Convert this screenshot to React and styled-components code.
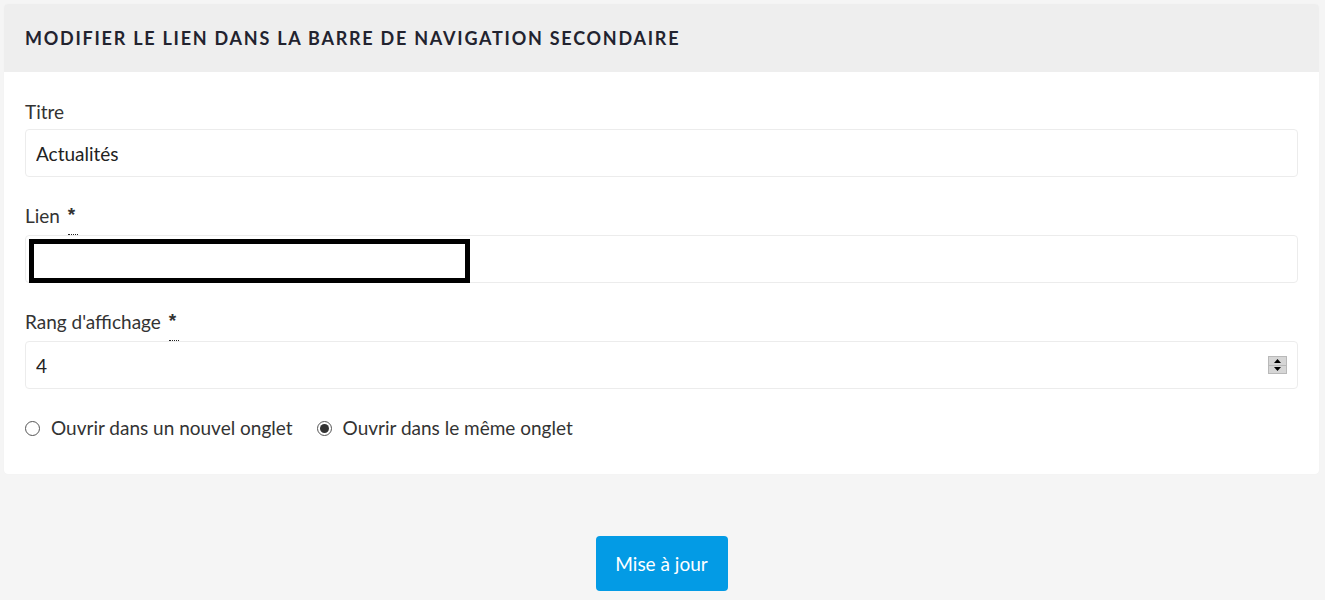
import styled, { createGlobalStyle } from 'styled-components';

const GlobalStyle = createGlobalStyle`
html, body {
margin: 0;
padding: 0;
background: #f5f5f5;
}
body {
font-family: Lato, "Liberation Sans", sans-serif;
color: #333;
}
* {
box-sizing: border-box;
}
`

function App() {
    return (
        <Page>
            <GlobalStyle />
            <Card>
                <CardHeader>
                    <h2>Modifier le lien dans la barre de navigation secondaire</h2>
                </CardHeader>
                <CardBody>
                    <Field>
                        <Label>Titre</Label>
                        <Input type="text" defaultValue="Actualités" />
                    </Field>
                    <Field>
                        <Label $required>Lien <Required title="obligatoire">*</Required></Label>
                        <InputWrap>
                            <Input type="text" defaultValue="" />
                            <Redacted />
                        </InputWrap>
                    </Field>
                    <Field>
                        <Label $required>Rang d'affichage <Required title="obligatoire">*</Required></Label>
                        <InputWrap>
                            <Input type="number" defaultValue="4" />
                            <Spinner>
                                <span>
                                    <svg width="7" height="4" viewBox="0 0 7 4"><path d="M3.5 0 L7 4 L0 4 Z" fill="#000" /></svg>
                                </span>
                                <span>
                                    <svg width="7" height="4" viewBox="0 0 7 4"><path d="M0 0 L7 0 L3.5 4 Z" fill="#000" /></svg>
                                </span>
                            </Spinner>
                        </InputWrap>
                    </Field>
                    <RadioRow>
                        <RadioLabel>
                            <Radio type="radio" name="target" />
                            Ouvrir dans un nouvel onglet
                        </RadioLabel>
                        <RadioLabel>
                            <Radio type="radio" name="target" defaultChecked />
                            Ouvrir dans le même onglet
                        </RadioLabel>
                    </RadioRow>
                </CardBody>
            </Card>
            <Actions>
                <SubmitBtn type="button">Mise à jour</SubmitBtn>
            </Actions>
        </Page>
    );
}

const Page = styled.div`
padding: 4px 6px 9px 4px;
min-height: 600px;
`

const Card = styled.div`
background: #fff;
border-radius: 4px;
overflow: hidden;
box-shadow: 0 0 1px rgba(0,0,0,0.06);
`

const CardHeader = styled.div`
background: #eeeeee;
height: 68px;
display: flex;
align-items: center;
padding: 0 21px;
h2{
margin: 0;
font-size: 18px;
font-weight: 700;
text-transform: uppercase;
letter-spacing: 1.75px;
color: #22232f;
}
`

const CardBody = styled.div`
padding: 28px 21px 34px 21px;
`

const Field = styled.div`
margin-bottom: 27px;
`

const Label = styled.label`
display: block;
font-size: 19px;
line-height: 24px;
margin-bottom: ${props => props.$required ? '7px' : '5px'};
color: #333;
`

const Required = styled.abbr`
position: relative;
display: inline-block;
margin-left: 3px;
font-family: "Liberation Sans", Arial, sans-serif;
font-weight: 700;
font-size: 19px;
text-decoration: none;
vertical-align: top;
line-height: 22px;
&::after{
content: '';
position: absolute;
left: 0;
width: 10px;
bottom: -9px;
border-bottom: 1px dotted #222;
}
`

const InputWrap = styled.div`
position: relative;
`

const Input = styled.input`
display: block;
width: 100%;
height: 48px;
border: 1px solid #ececec;
border-radius: 4px;
padding: 0 10px;
font-family: inherit;
font-size: 19px;
color: #222;
background: #fff;
outline: none;
-moz-appearance: textfield;
&::-webkit-inner-spin-button,
&::-webkit-outer-spin-button{
-webkit-appearance: none;
margin: 0;
}
`

const Redacted = styled.div`
position: absolute;
left: 4px;
top: 4px;
width: 441px;
height: 44px;
border: 5px solid #000;
background: #fff;
`

const Spinner = styled.div`
position: absolute;
right: 11px;
top: 15px;
width: 19px;
height: 18px;
display: flex;
flex-direction: column;
border: 1px solid #b9b9b9;
background: #d6d6d6;
span{
flex: 1;
display: flex;
align-items: center;
justify-content: center;
}
span:first-child{
border-bottom: 1px solid #b9b9b9;
}
`

const RadioRow = styled.div`
display: flex;
align-items: center;
gap: 24px;
`

const RadioLabel = styled.label`
display: flex;
align-items: center;
gap: 11px;
font-size: 19px;
line-height: 24px;
color: #333;
`

const Radio = styled.input`
appearance: none;
-webkit-appearance: none;
margin: 0;
width: 15px;
height: 15px;
border: 1px solid #555;
border-radius: 50%;
background: #fff;
position: relative;
&:checked::after{
content: '';
position: absolute;
left: 2px;
top: 2px;
width: 9px;
height: 9px;
border-radius: 50%;
background: #333;
}
`

const Actions = styled.div`
display: flex;
justify-content: center;
margin-top: 62px;
`

const SubmitBtn = styled.button`
background: #039be5;
color: #fff;
border: 0;
border-radius: 4px;
height: 55px;
width: 132px;
font-family: inherit;
font-size: 19px;
`

export default App;
